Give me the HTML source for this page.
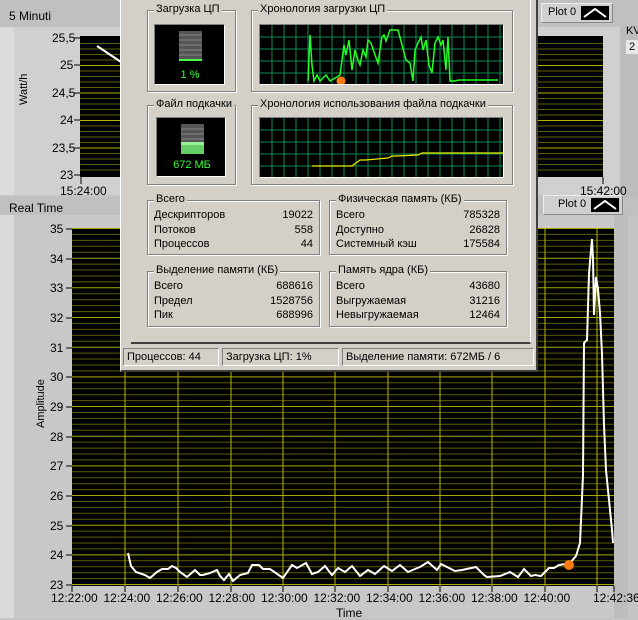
<!DOCTYPE html>
<html><head><meta charset="utf-8"><style>
*{margin:0;padding:0;box-sizing:border-box}
body{width:638px;height:618px;overflow:hidden;background:#c4c4c4;font-family:"Liberation Sans",sans-serif;font-size:11px;color:#000;position:relative}
.a{position:absolute;white-space:nowrap}
#dlg{position:absolute;left:120px;top:-2px;width:418px;height:374px;background:#d4d0c8;border-right:2px solid #404040;border-bottom:2px solid #404040;border-left:1px solid #fff}
.g{position:absolute;border:1px solid #808080;box-shadow:1px 1px 0 #fff,inset 1px 1px 0 #fff}
.g>.t{position:absolute;top:-8px;left:6px;background:#d4d0c8;padding:0 2px}
.row{position:absolute;left:6px;right:6px;height:14px}
.row span:last-child{position:absolute;right:0}
.blk{position:absolute;background:#000;border:1px solid #808080;border-right-color:#fff;border-bottom-color:#fff}
.sb{position:absolute;top:350px;height:18px;border:1px solid #808080;border-right-color:#fff;border-bottom-color:#fff;padding:2px 3px}
.leg{position:absolute;background:#d0d0d0;border:1px solid #eee;border-right-color:#888;border-bottom-color:#888;padding:2px 6px}
</style></head><body>
<svg class="a" style="left:0;top:0" width="638" height="618">
<rect x="0" y="0" width="638" height="27" fill="#c0c0c0"/>
<rect x="0" y="27" width="622" height="168" fill="#d0d0d0"/>
<rect x="0" y="27" width="14" height="168" fill="#dcdcdc"/>
<rect x="0" y="215" width="628" height="403" fill="#c8c8c8"/>
<rect x="0" y="215" width="14" height="403" fill="#dadada"/>
<rect x="614" y="215" width="14" height="403" fill="#bdbdbd"/>
<rect x="620" y="27" width="18" height="170" fill="#bcbcbc"/>
<rect x="626" y="40" width="12" height="14" fill="#e8e8e8"/>
<rect x="0" y="197" width="638" height="18" fill="#c0c0c0"/>
<rect x="80" y="36" width="523" height="141" fill="#000"/>
<g stroke="#5e5e00" stroke-width="1">
<path d="M80 43.5H603M80 49H603M80 54.5H603M80 60H603M80 71H603M80 76.5H603M80 82H603M80 87.5H603M80 98.5H603M80 104H603M80 109.5H603M80 115H603M80 126H603M80 131.5H603M80 137H603M80 142.5H603M80 153.5H603M80 159H603M80 164.5H603M80 170H603"/></g>
<g stroke="#b0b000"><path d="M80 65.5H603M80 93H603M80 120.5H603M80 148H603"/></g>
<path d="M97 46L121 62" stroke="#fff" stroke-width="2"/>
<g stroke="#000"><path d="M74 38H80M74 65H80M74 93H80M74 120H80M74 148H80M74 175H80M81 177V184M603 177V184"/></g>
<rect x="72" y="228" width="542" height="358" fill="#000"/>
<g stroke="#5c5c00"><path id="mn" d=""/></g>
<g stroke="#a8a800"><path id="mj" d=""/></g>
<g stroke="#b8b800"><path d="M125 228V586M178 228V586M231 228V586M283 228V586M335 228V586M388 228V586M440 228V586M492 228V586M545 228V586M597 228V586"/></g>
<polyline fill="none" stroke="#fff" stroke-width="2" points="128,553 131,566 136,572 145,575 150,578 157,572 162,569 168,569 172,566 176,568 180,572 187,577 195,570 200,575 203,575 210,573 217,570 220,576 224,580 229,574 233,581 240,575 248,573 252,565 259,565 263,569 270,569 283,578 292,565 297,568 306,563 312,574 318,572 325,566 332,575 338,568 345,572 352,566 360,576 368,570 375,574 384,566 392,571 400,565 408,572 415,569 420,567 428,562 437,570 441,564 455,571 462,570 476,567 484,575 487,577 500,576 510,572 518,577 524,569 531,576 535,575 541,576 549,568 554,568 559,565 566,564 570,563 576,556 580,543 583,475 584,343 587,340 589,274 591,250 592,239 593,259 594,315 596,277 598,289 600,313 602,354 604,425 606,470 609,500 612,530 613,543"/>
<circle cx="569" cy="565" r="5" fill="#ff7a10"/>
<g stroke="#000"><path d="M66 229H72M66 259H72M66 288H72M66 318H72M66 348H72M66 377H72M66 407H72M66 437H72M66 466H72M66 496H72M66 526H72M66 555H72M66 585H72M72 586V592M125 586V592M178 586V592M231 586V592M283 586V592M335 586V592M388 586V592M440 586V592M492 586V592M545 586V592M597 586V592M614 586V592"/></g>
</svg>
<script>
(function(){var d="",m="";for(var i=0;i<=60;i++){var y=(228.5+i*5.934).toFixed(1);if(i%5==0)m+="M72 "+y+"H614";else d+="M72 "+y+"H614";}document.getElementById('mn').setAttribute('d',d);document.getElementById('mj').setAttribute('d',m);})();
</script>
<div class="a" style="left:9px;top:9px;font-size:12px">5 Minuti</div>
<div class="a" style="left:9px;top:201px;font-size:12px">Real Time</div>
<div class="a" style="left:626px;top:25px">KV</div>
<div class="a" style="left:629px;top:41px">2</div>
<div class="leg" style="left:541px;top:3px;width:72px;height:20px">Plot 0<span style="position:absolute;right:3px;top:2px;width:28px;height:14px;background:#000"><svg width="28" height="14"><path d="M3 11L14 3L25 11" stroke="#fff" stroke-width="2" fill="none"/></svg></span></div>
<div class="leg" style="left:543px;top:195px;width:80px;height:20px;padding-left:14px">Plot 0<span style="position:absolute;right:3px;top:2px;width:28px;height:14px;background:#000"><svg width="28" height="14"><path d="M3 11L14 3L25 11" stroke="#fff" stroke-width="2" fill="none"/></svg></span></div>
<div class="a" style="left:52px;top:31px;font-size:12px">25,5</div>
<div class="a" style="left:60px;top:58px;font-size:12px">25</div>
<div class="a" style="left:52px;top:86px;font-size:12px">24,5</div>
<div class="a" style="left:60px;top:113px;font-size:12px">24</div>
<div class="a" style="left:52px;top:141px;font-size:12px">23,5</div>
<div class="a" style="left:60px;top:168px;font-size:12px">23</div>
<div class="a" style="left:60px;top:184px;font-size:12px">15:24:00</div>
<div class="a" style="left:580px;top:184px;font-size:12px">15:42:00</div>
<div class="a" style="left:18px;top:105px;transform:rotate(-90deg);transform-origin:0 0">Watt/h</div>
<div class="a" style="left:35px;top:428px;transform:rotate(-90deg);transform-origin:0 0">Amplitude</div>
<div id="yl"></div>
<div id="xl"></div>
<script>
(function(){var h="";for(var i=0;i<=12;i++){var y=585-i*29.67;h+='<div class="a" style="left:50px;top:'+(y-7)+'px;font-size:12px">'+(23+i)+'</div>';}
document.getElementById('yl').innerHTML=h;
var t=["12:22:00","12:24:00","12:26:00","12:28:00","12:30:00","12:32:00","12:34:00","12:36:00","12:38:00","12:40:00"];h="";
for(var j=0;j<t.length;j++){h+='<div class="a" style="left:'+(72+j*52.5-21)+'px;top:591px;font-size:12px">'+t[j]+'</div>';}
h+='<div class="a" style="left:593px;top:591px;font-size:12px">12:42:36</div><div class="a" style="left:336px;top:606px;font-size:12px">Time</div>';
document.getElementById('xl').innerHTML=h;})();
</script>
<div id="dlg">
<div class="g" style="left:26px;top:12px;width:89px;height:82px"><span class="t">Загрузка ЦП</span>
<div class="blk" style="left:6px;top:13px;width:71px;height:61px">
<svg width="69" height="59"><rect x="24" y="6" width="23" height="28" fill="#555"/><g stroke="#888"><path d="M24 10H47M24 15H47M24 20H47M24 25H47M24 30H47"/></g><rect x="24" y="34" width="23" height="2" fill="#4f4"/><text x="35" y="53" fill="#3f3" font-size="11" text-anchor="middle" font-family="Liberation Sans">1 %</text></svg></div></div>
<div class="g" style="left:130px;top:12px;width:262px;height:82px"><span class="t">Хронология загрузки ЦП</span>
<div class="blk" style="left:7px;top:13px;width:245px;height:61px">
<svg width="243" height="59"><g stroke="#0a8a50"><path d="M0 12H243M0 24H243M0 36H243M0 48H243M12 0V59M24 0V59M36 0V59M48 0V59M60 0V59M72 0V59M84 0V59M96 0V59M108 0V59M120 0V59M132 0V59M144 0V59M156 0V59M168 0V59M180 0V59M192 0V59M204 0V59M216 0V59M228 0V59M240 0V59"/></g>
<polyline fill="none" stroke="#2f2" stroke-width="1.5" points="48,56 50,10 52,40 54,56 57,50 60,56 66,50 70,56 80,50 84,20 86,30 89,15 92,45 95,25 98,35 100,40 103,25 106,32 108,15 111,18 115,30 118,38 122,12 124,10 126,16 130,5 138,5 142,20 146,35 150,38 153,56 155,25 158,18 161,12 163,25 166,15 169,40 172,48 175,18 178,12 181,20 183,15 186,45 188,12 190,56 195,56 199,55 215,55 220,55 238,55"/>
<circle cx="81" cy="56" r="4.5" fill="#ff7a10"/></svg></div></div>
<div class="g" style="left:26px;top:107px;width:89px;height:80px"><span class="t">Файл подкачки</span>
<div class="blk" style="left:8px;top:11px;width:70px;height:60px">
<svg width="68" height="58"><rect x="24" y="6" width="23" height="30" fill="#555"/><g stroke="#888"><path d="M24 11H47M24 16H47M24 21H47"/></g><rect x="24" y="24" width="23" height="12" fill="#6c6"/><rect x="24" y="24" width="23" height="3" fill="#9e9"/><text x="35" y="50" fill="#3f3" font-size="11" text-anchor="middle" font-family="Liberation Sans">672 МБ</text></svg></div></div>
<div class="g" style="left:130px;top:107px;width:262px;height:80px"><span class="t">Хронология использования файла подкачки</span>
<div class="blk" style="left:7px;top:11px;width:245px;height:61px">
<svg width="243" height="59"><g stroke="#0a8a50"><path d="M0 12H243M0 24H243M0 36H243M0 48H243M12 0V59M24 0V59M36 0V59M48 0V59M60 0V59M72 0V59M84 0V59M96 0V59M108 0V59M120 0V59M132 0V59M144 0V59M156 0V59M168 0V59M180 0V59M192 0V59M204 0V59M216 0V59M228 0V59M240 0V59"/></g>
<polyline fill="none" stroke="#ee0" stroke-width="1.2" points="52,48 92,48 96,45 100,42 106,42 128,40 132,38 136,38 158,37 162,35 243,35"/></svg></div></div>
<div class="g" style="left:26px;top:202px;width:173px;height:55px"><span class="t">Всего</span>
<div class="row" style="top:8px"><span>Дескрипторов</span><span>19022</span></div>
<div class="row" style="top:23px"><span>Потоков</span><span>558</span></div>
<div class="row" style="top:37px"><span>Процессов</span><span>44</span></div></div>
<div class="g" style="left:208px;top:202px;width:178px;height:55px"><span class="t">Физическая память (КБ)</span>
<div class="row" style="top:8px"><span>Всего</span><span>785328</span></div>
<div class="row" style="top:23px"><span>Доступно</span><span>26828</span></div>
<div class="row" style="top:37px"><span>Системный кэш</span><span>175584</span></div></div>
<div class="g" style="left:26px;top:273px;width:173px;height:56px"><span class="t">Выделение памяти (КБ)</span>
<div class="row" style="top:8px"><span>Всего</span><span>688616</span></div>
<div class="row" style="top:23px"><span>Предел</span><span>1528756</span></div>
<div class="row" style="top:37px"><span>Пик</span><span>688996</span></div></div>
<div class="g" style="left:208px;top:273px;width:178px;height:56px"><span class="t">Память ядра (КБ)</span>
<div class="row" style="top:8px"><span>Всего</span><span>43680</span></div>
<div class="row" style="top:23px"><span>Выгружаемая</span><span>31216</span></div>
<div class="row" style="top:37px"><span>Невыгружаемая</span><span>12464</span></div></div>
<div style="position:absolute;left:10px;top:0;width:400px;height:346px;border-right:1px solid #fff;border-bottom:2px solid #404040"></div>
<div class="sb" style="left:2px;width:96px">Процессов: 44</div>
<div class="sb" style="left:101px;width:117px">Загрузка ЦП: 1%</div>
<div class="sb" style="left:221px;width:192px">Выделение памяти: 672МБ / 6</div>
</div>
</body></html>
